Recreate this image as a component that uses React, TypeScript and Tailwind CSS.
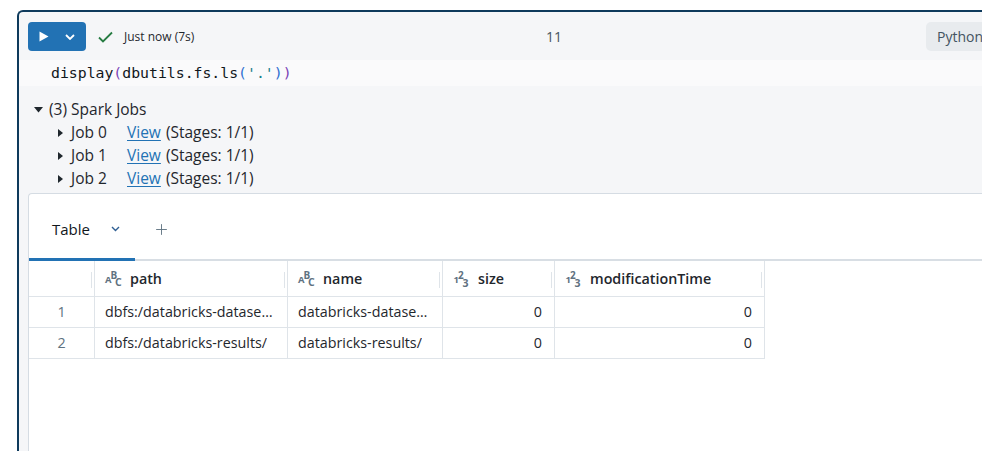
import { Plus } from 'lucide-react'

const jobs = [0, 1, 2]

const rows = [
  { n: 1, path: 'dbfs:/databricks-datasets/', name: 'databricks-datasets/', size: 0, mod: 0 },
  { n: 2, path: 'dbfs:/databricks-results/', name: 'databricks-results/', size: 0, mod: 0 },
]

const StringIcon = () => (
  <svg width="20" height="17" viewBox="0 0 20 17" className="shrink-0 overflow-visible">
    <g fill="#5f7281" fontFamily="Open Sans, sans-serif" fontWeight="700">
      <text x="0" y="13" fontSize="9.5">A</text>
      <text x="5.5" y="8.5" fontSize="10">B</text>
      <text x="10" y="16" fontSize="10.5">C</text>
    </g>
  </svg>
)

const NumberIcon = () => (
  <svg width="20" height="17" viewBox="0 0 20 17" className="shrink-0 overflow-visible">
    <g fill="#5f7281" fontFamily="Open Sans, sans-serif" fontWeight="700">
      <text x="0.5" y="13" fontSize="9.5">1</text>
      <text x="5" y="8.5" fontSize="10">2</text>
      <text x="9.5" y="16.5" fontSize="10.5">3</text>
    </g>
  </svg>
)

const HeaderCell = ({ label, icon }: { label?: string; icon?: 'str' | 'num' }) => (
  <div className="relative flex h-full items-center gap-[5px] border-r border-[#dfe4e9] pl-[10px]">
    {icon === 'str' && <StringIcon />}
    {icon === 'num' && <NumberIcon />}
    {label && <span className="text-[14.3px] font-semibold text-[#1f272d]">{label}</span>}
    <span className="absolute right-[2px] top-[11px] h-[16px] w-px bg-[#dfe4e9]" />
  </div>
)

export default function App() {
  return (
    <div className="h-[451px] w-[982px] overflow-hidden bg-white font-['Open_Sans',sans-serif] text-[#1f272d]">
      <div className="ml-[17px] mt-[10px] flex h-[441px] w-[1040px] flex-col rounded-tl-[6px] border-l-2 border-t-2 border-[#0e3a5c] bg-[#f5f6f8]">
        {/* cell header */}
        <div className="flex h-[48px] items-center pl-[9px] pt-[1px]">
          <button className="flex h-[29px] w-[58px] items-center rounded-[4px] bg-[#2272b4] pl-[11px]">
            <svg width="10" height="11" viewBox="0 0 10 11">
              <path d="M0.5 0.5 L9.5 5.5 L0.5 10.5 Z" fill="white" />
            </svg>
            <svg width="10" height="6" viewBox="0 0 10 6" className="ml-[16px]">
              <path d="M1 1 L5 5 L9 1" fill="none" stroke="white" strokeWidth="1.8" />
            </svg>
          </button>
          <svg width="15" height="12" viewBox="0 0 15 12" className="ml-[12px]">
            <path d="M1 6.5 L5 10.5 L14 1.5" fill="none" stroke="#277c43" strokeWidth="1.8" />
          </svg>
          <span className="ml-[11px] w-[90px] text-[12px] text-[#1f272d]">Just now (7s)</span>
          <span className="ml-[332px] text-[14px] text-[#445461]">11</span>
          <div className="ml-[364px] flex h-[29px] w-[110px] items-center rounded-[5px] bg-[#e8ebee] pl-[11px] text-[14px] text-[#445461]">
            Python
          </div>
        </div>

        {/* code */}
        <div className="flex h-[26px] items-center bg-[#fafafb] pl-[32px] font-['DejaVu_Sans_Mono',monospace] text-[14.8px] text-[#11171c]">
          <span>display</span>
          <span className="text-[#7a44b6]">(</span>
          <span>dbutils.fs.ls</span>
          <span className="text-[#2f6fd1]">(</span>
          <span className="text-[#1b7f8c]">'.'</span>
          <span className="text-[#2f6fd1]">)</span>
          <span className="text-[#7a44b6]">)</span>
        </div>

        {/* spark jobs */}
        <div className="pl-[15px] pt-[12px] text-[15.5px] leading-[23px]">
          <div className="flex items-center">
            <svg width="9" height="6" viewBox="0 0 9 6">
              <path d="M0 0 L9 0 L4.5 5.5 Z" fill="#1f272d" />
            </svg>
            <span className="ml-[6px]">(3) Spark Jobs</span>
          </div>
          {jobs.map((j) => (
            <div key={j} className="flex items-center pl-[24px]">
              <svg width="5" height="8" viewBox="0 0 5 8">
                <path d="M0 0 L5 4 L0 8 Z" fill="#1f272d" />
              </svg>
              <span className="ml-[8px] w-[56px]">Job {j}</span>
              <a className="text-[#2272b4] underline underline-offset-2">View</a>
              <span className="ml-[5px]">(Stages: 1/1)</span>
            </div>
          ))}
        </div>

        {/* results panel */}
        <div className="ml-[9px] mt-[3px] flex-1 rounded-tl-[4px] border-l border-t border-[#d5dce3] bg-white pt-[6px]">
          <div className="flex h-[61px] items-stretch border-b-2 border-[#d8dee4]">
            <div className="-mb-[2px] flex w-[106px] items-center border-b-[3px] border-[#2272b4] pl-[23px]">
              <span className="text-[15px] text-[#11171c]">Table</span>
              <svg width="9" height="6" viewBox="0 0 9 6" className="ml-[21px]">
                <path d="M1 1 L4.5 4.5 L8 1" fill="none" stroke="#2f5f93" strokeWidth="1.4" />
              </svg>
            </div>
            <div className="ml-[18px] flex items-center">
              <Plus size={17} strokeWidth={1.3} color="#5f7281" />
            </div>
          </div>

          <div className="w-[736px]">
            <div className="grid h-[36px] grid-cols-[66px_193px_155px_112px_210px] border-b border-[#dfe4e9]">
              <HeaderCell />
              <HeaderCell icon="str" label="path" />
              <HeaderCell icon="str" label="name" />
              <HeaderCell icon="num" label="size" />
              <HeaderCell icon="num" label="modificationTime" />
            </div>
            {rows.map((r) => (
              <div
                key={r.n}
                className="grid h-[31px] grid-cols-[66px_193px_155px_112px_210px] border-b border-[#dfe4e9] text-[14.3px]"
              >
                <div className="flex items-center justify-center border-r border-[#dfe4e9] text-[#5f7281]">{r.n}</div>
                <div className="flex items-center overflow-hidden border-r border-[#dfe4e9] pl-[10px] pr-[11px]">
                  <span className="truncate">{r.path}</span>
                </div>
                <div className="flex items-center overflow-hidden border-r border-[#dfe4e9] pl-[10px] pr-[11px]">
                  <span className="truncate">{r.name}</span>
                </div>
                <div className="flex items-center justify-end border-r border-[#dfe4e9] pr-[12px]">{r.size}</div>
                <div className="flex items-center justify-end border-r border-[#dfe4e9] pr-[12px]">{r.mod}</div>
              </div>
            ))}
          </div>
        </div>
      </div>
    </div>
  )
}
